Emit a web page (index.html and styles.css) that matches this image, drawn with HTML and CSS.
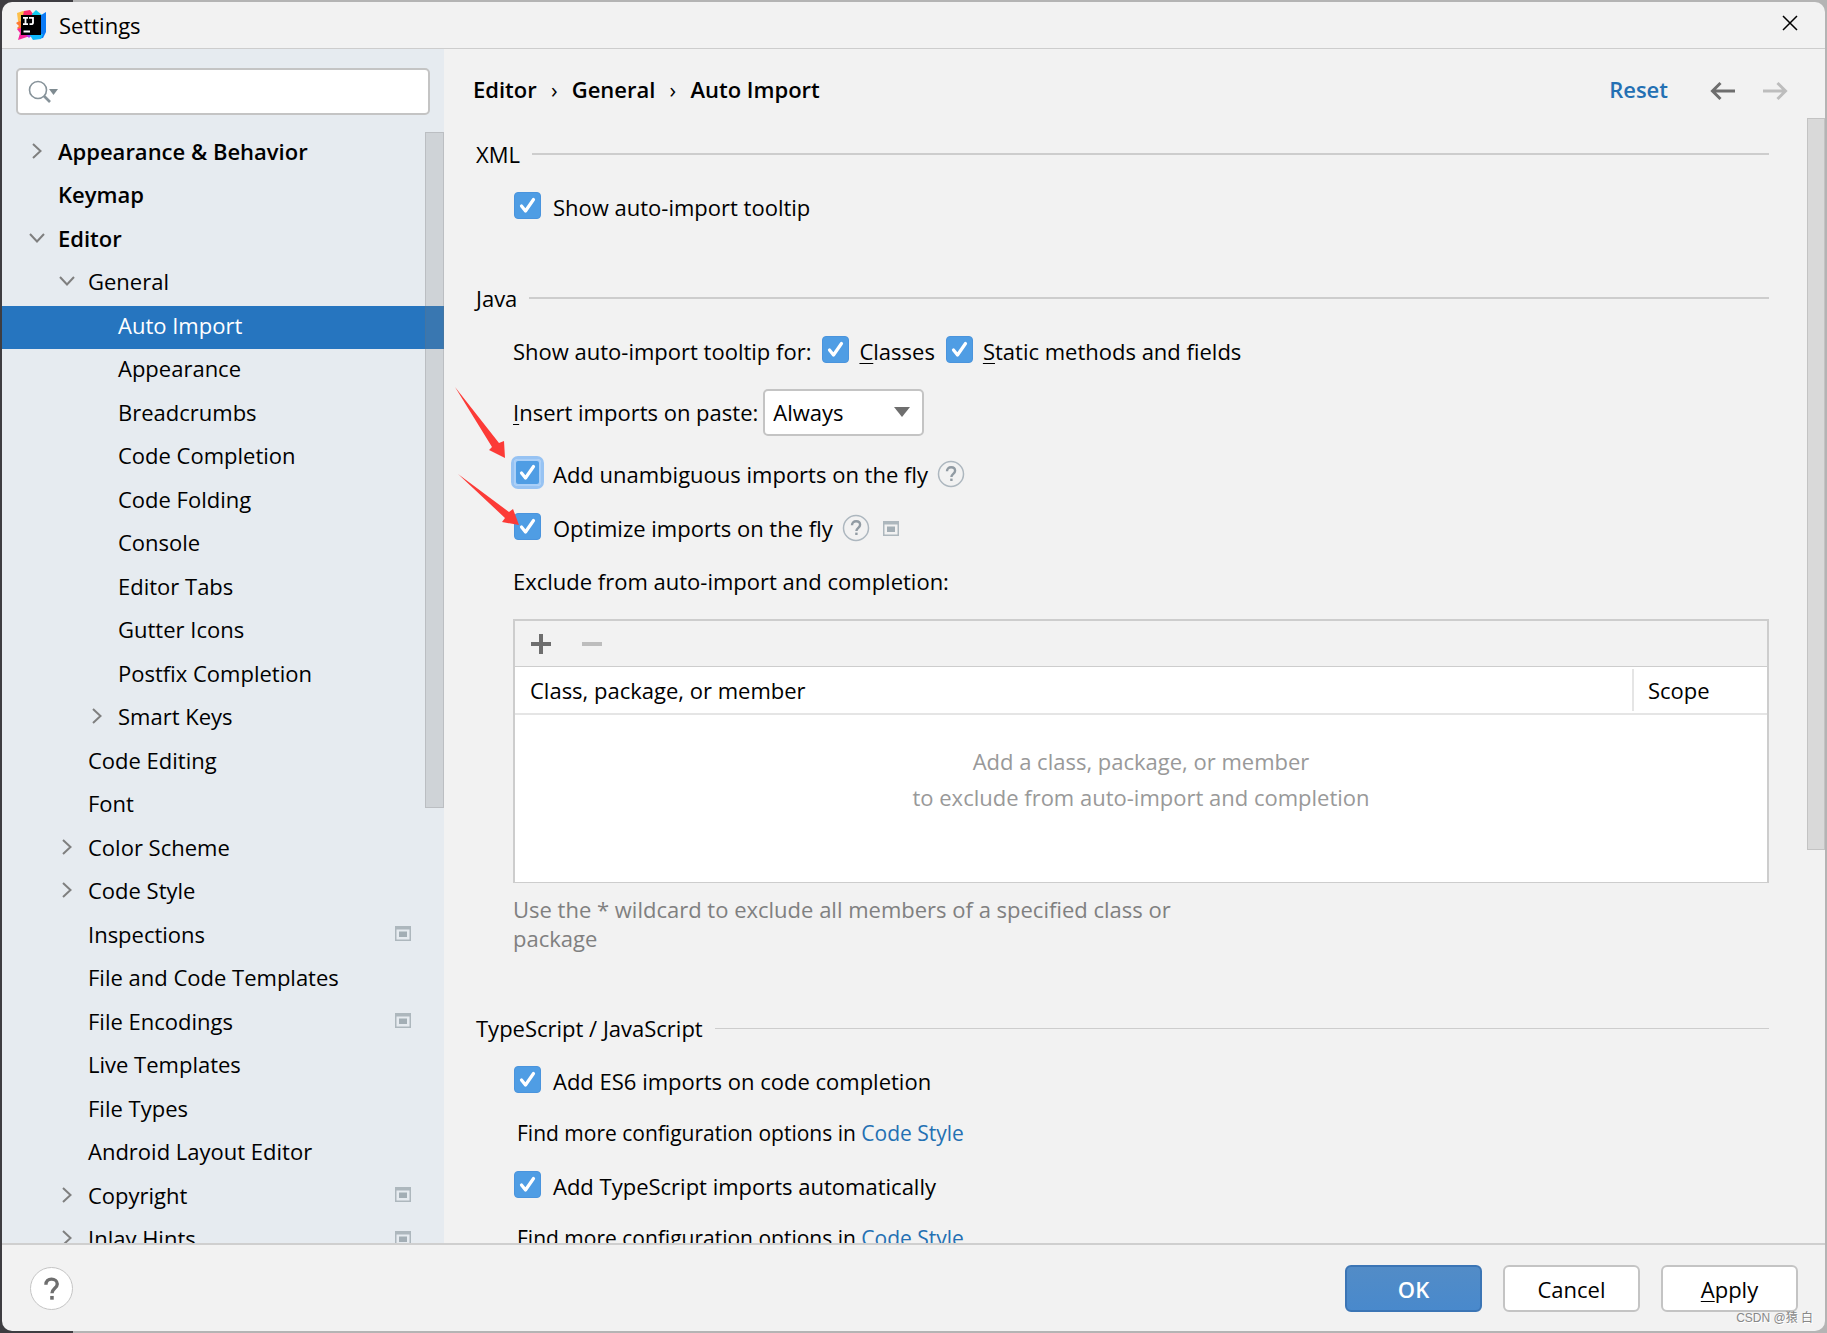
FILE: index.html
```html
<!DOCTYPE html>
<html lang="en">
<head>
<meta charset="utf-8">
<title>Settings</title>
<link rel="stylesheet" href="styles.css">
</head>
<body>
<svg class="defs" aria-hidden="true">
  <symbol id="right" viewBox="0 0 20 20"><path d="M6 3l7.500 7L6 17" fill="none" stroke="#7f7f7f" stroke-width="2"/></symbol>
  <symbol id="down" viewBox="0 0 20 20"><path d="M3 6l7 7.500L17 6" fill="none" stroke="#7f7f7f" stroke-width="2"/></symbol>
  <symbol id="project" viewBox="0 0 16 15"><path fill="#adb7bd" fill-rule="evenodd" d="M0 0h16v15H0zM1.500 3.500v10h13v-10z"/><path fill="#a3aeb5" d="M4 5.500h8v5.500H4z"/></symbol>
  <symbol id="question" viewBox="0 0 28 28"><circle cx="14" cy="14" r="12.500" fill="none" stroke="#adb7bf" stroke-width="1.500"/><path d="M10 11.300c0-2.600 1.700-4 4.100-4 2.300 0 4 1.400 4 3.500 0 3-3.700 3.100-3.700 6.200" fill="none" stroke="#919ba3" stroke-width="2.400"/><path fill="#919ba3" d="M13.200 18.600h2.400v2.400h-2.400z"/></symbol>
</svg>
<div class="window">
  <header class="titlebar">
    <svg class="logo" viewBox="0 0 30 30" aria-hidden="true">
      <path fill="#ff7a2f" d="M0 13l6-4 3 9-3 5-5-5 2-2z"/>
      <path fill="#fdc04b" d="M1 3l6-2 5 1-4 10-6-1z"/>
      <path fill="#ff2d6b" d="M8 1l6-1 4 5 1 4H6z"/>
      <path fill="#f7269c" d="M1 19l7-2 9 9-6 1-9 3 2-7z"/>
      <path fill="#ad3df2" d="M9 24h8l-4 4z"/>
      <path fill="#12cbee" d="M16 4l4-4 6 5v5H15z"/>
      <path fill="#0a7af5" d="M22 7l8-5v20l-3 6-7 1-2-5z"/>
      <path fill="#10b9fb" d="M13 24h14l-2 5-8 1z"/>
      <path d="M5 5h20v20H5z"/>
      <path fill="none" stroke="#fff" stroke-width="1.800" d="M7 7.900h5M9.500 7.900v6.200M7 14.100h5M13 7.900h4v4.500q0 1.800-2 1.800h-1.500M7.500 21.500h6.500"/>
    </svg>
    <h1 class="title">Settings</h1>
    <button class="close" aria-label="Close"><svg width="16" height="16" viewBox="0 0 16 16"><path d="M1 1l14 14M15 1L1 15" stroke="#000" stroke-width="1.500"/></svg></button>
  </header>

  <nav class="sidebar" aria-label="Settings categories">
    <div class="search">
      <svg width="32" height="24" viewBox="0 0 32 24" aria-hidden="true"><circle cx="10" cy="10" r="8.500" fill="none" stroke="#87939a" stroke-width="1.600"/><path d="M16 16l6 6" stroke="#87939a" stroke-width="2.600"/><path fill="#7f8b91" d="M21 9h9l-4.500 6z"/></svg>
      <input type="text" aria-label="Search settings">
    </div>
    <div class="tree-pane">
      <ul class="tree">
        <li class="bold"><svg class="arrow"><use href="#right"/></svg><a href="#">Appearance &amp; Behavior</a></li>
        <li class="bold"><span class="arrow"></span><a href="#">Keymap</a></li>
        <li class="bold"><svg class="arrow"><use href="#down"/></svg><a href="#">Editor</a></li>
        <li class="l2"><svg class="arrow"><use href="#down"/></svg><a href="#">General</a></li>
        <li class="l3 selected"><span class="arrow"></span><a href="#" aria-current="page">Auto Import</a></li>
        <li class="l3"><span class="arrow"></span><a href="#">Appearance</a></li>
        <li class="l3"><span class="arrow"></span><a href="#">Breadcrumbs</a></li>
        <li class="l3"><span class="arrow"></span><a href="#">Code Completion</a></li>
        <li class="l3"><span class="arrow"></span><a href="#">Code Folding</a></li>
        <li class="l3"><span class="arrow"></span><a href="#">Console</a></li>
        <li class="l3"><span class="arrow"></span><a href="#">Editor Tabs</a></li>
        <li class="l3"><span class="arrow"></span><a href="#">Gutter Icons</a></li>
        <li class="l3"><span class="arrow"></span><a href="#">Postfix Completion</a></li>
        <li class="l3"><svg class="arrow"><use href="#right"/></svg><a href="#">Smart Keys</a></li>
        <li class="l2"><span class="arrow"></span><a href="#">Code Editing</a></li>
        <li class="l2"><span class="arrow"></span><a href="#">Font</a></li>
        <li class="l2"><svg class="arrow"><use href="#right"/></svg><a href="#">Color Scheme</a></li>
        <li class="l2"><svg class="arrow"><use href="#right"/></svg><a href="#">Code Style</a></li>
        <li class="l2"><span class="arrow"></span><a href="#">Inspections</a><svg class="project"><use href="#project"/></svg></li>
        <li class="l2"><span class="arrow"></span><a href="#">File and Code Templates</a></li>
        <li class="l2"><span class="arrow"></span><a href="#">File Encodings</a><svg class="project"><use href="#project"/></svg></li>
        <li class="l2"><span class="arrow"></span><a href="#">Live Templates</a></li>
        <li class="l2"><span class="arrow"></span><a href="#">File Types</a></li>
        <li class="l2"><span class="arrow"></span><a href="#">Android Layout Editor</a></li>
        <li class="l2"><svg class="arrow"><use href="#right"/></svg><a href="#">Copyright</a><svg class="project"><use href="#project"/></svg></li>
        <li class="l2"><svg class="arrow"><use href="#right"/></svg><a href="#">Inlay Hints</a><svg class="project"><use href="#project"/></svg></li>
      </ul>
      <div class="thumb tree-thumb"></div>
    </div>
  </nav>

  <main class="content">
    <div class="content-head">
      <div class="crumbs"><span>Editor</span><span class="sep">›</span><span>General</span><span class="sep">›</span><span>Auto Import</span></div>
      <a class="reset" href="#">Reset</a>
      <button class="nav" aria-label="Back"><svg width="26" height="20" viewBox="0 0 26 20"><path d="M25 10H3M10.500 2L2.500 10l8 8" fill="none" stroke="#6e6e6e" stroke-width="3"/></svg></button>
      <button class="nav" aria-label="Forward" disabled><svg width="26" height="20" viewBox="0 0 26 20"><path d="M1 10h22M15.500 2l8 8-8 8" fill="none" stroke="#bdbdbd" stroke-width="3"/></svg></button>
    </div>
    <div class="pane">
      <div class="form">
        <section>
          <h2>XML</h2>
          <div class="row"><label><input type="checkbox" checked>Show auto-import tooltip</label></div>
        </section>

        <section>
          <h2>Java</h2>
          <div class="row inline"><span>Show auto-import tooltip for:</span><label><input type="checkbox" checked><span><u>C</u>lasses</span></label><label><input type="checkbox" checked><span><u>S</u>tatic methods and fields</span></label></div>
          <div class="row select-row"><label for="paste"><span><u>I</u>nsert imports on paste:</span></label><select id="paste"><option>Always</option><option>Ask</option><option>Never</option></select></div>
          <div class="row"><label><input class="focused" type="checkbox" checked>Add unambiguous imports on the fly</label><svg class="question"><use href="#question"/></svg></div>
          <div class="row tight"><label><input type="checkbox" checked>Optimize imports on the fly</label><svg class="question"><use href="#question"/></svg><svg class="project"><use href="#project"/></svg></div>
          <p class="caption" id="exclude">Exclude from auto-import and completion:</p>
          <div class="excludes">
            <div class="tools">
              <button aria-label="Add"><svg width="20" height="20" viewBox="0 0 20 20"><path d="M0 10h20M10 0v20" stroke="#6e6e6e" stroke-width="4"/></svg></button>
              <button aria-label="Remove" disabled><svg width="20" height="20" viewBox="0 0 20 20"><path d="M0 10h20" stroke="#bdbdbd" stroke-width="4"/></svg></button>
            </div>
            <table aria-labelledby="exclude">
              <thead><tr><th>Class, package, or member</th><th class="scope"><span>Scope</span></th></tr></thead>
              <tbody><tr><td colspan="2">Add a class, package, or member<br>to exclude from auto-import and completion</td></tr></tbody>
            </table>
          </div>
          <p class="hint">Use the * wildcard to exclude all members of a specified class or package</p>
        </section>

        <section>
          <h2 class="thin">TypeScript / JavaScript</h2>
          <div class="row"><label><input type="checkbox" checked>Add ES6 imports on code completion</label></div>
          <p class="more">Find more configuration options in <a href="#">Code Style</a></p>
          <div class="row"><label><input type="checkbox" checked>Add TypeScript imports automatically</label></div>
          <p class="more">Find more configuration options in <a href="#">Code Style</a></p>
        </section>
      </div>
      <div class="thumb pane-thumb"></div>
    </div>
  </main>

  <footer class="footer">
    <button class="help" aria-label="Help"><svg width="41" height="41" viewBox="0 0 44 44"><path d="M16 18c0-4 2.600-6 6-6s6.200 2 6.200 5.200c0 4.500-5.700 4.700-5.700 10" fill="none" stroke="#6e6e6e" stroke-width="3.600"/><path fill="#6e6e6e" d="M20.600 30h3.800v4h-3.800z"/></svg></button>
    <button class="btn primary">OK</button>
    <button class="btn">Cancel</button>
    <button class="btn"><span><u>A</u>pply</span></button>
  </footer>
</div>
<svg class="pointers" width="70" height="145" viewBox="0 0 70 145" aria-hidden="true"><path fill="#fc3b37" d="M0 2l44 56 5-2 1 17-16-8 3-3zM3 89l51 38 4-3 6 16-17-3 3-4z"/></svg>
<div class="watermark">CSDN @猿 白</div>
</body>
</html>
```
FILE: styles.css
```css
* { box-sizing: border-box; }
html, body { height: 100%; }
body {
  margin: 0;
  padding: 2px;
  overflow: hidden;
  background: linear-gradient(90deg, #3e3d41 0, #3e3d41 73px, #b4b4b4 73px);
  font: 22px/30px "Open Sans", "Noto Sans CJK SC", sans-serif;
  color: #000;
}
h1, h2, p, ul { margin: 0; padding: 0; font-size: inherit; font-weight: 400; }
button { border: 0; padding: 0; background: none; font: inherit; color: inherit; }
a { color: #2470b3; text-decoration: none; }
u { text-underline-offset: 3px; text-decoration-thickness: 1px; }
svg { display: block; flex: none; }
.defs { position: absolute; width: 0; height: 0; }

.window {
  display: grid;
  grid-template: 47px minmax(0, 1fr) 88px / 442px minmax(0, 1fr);
  height: 100%;
  border-radius: 10px;
  overflow: hidden;
  background: #f2f2f2;
}
.titlebar {
  grid-column: 1 / -1;
  display: flex;
  align-items: center;
  padding: 0 27px 0 14px;
  border-bottom: 1px solid #cdcdcd;
}
.logo { width: 30px; height: 30px; }
.title { margin-left: 13px; flex: 1; }
.close { padding: 0 0 4px; }

.sidebar { display: flex; flex-direction: column; min-height: 0; background: #e6ebf0; }
.search {
  display: flex;
  align-items: center;
  height: 47px;
  margin: 19px 14px 17px;
  padding-left: 10px;
  border: 2px solid #c4c4c4;
  border-radius: 5px;
  background: #fff;
}
.search input { flex: 1; min-width: 0; border: 0; outline: 0; background: none; font: inherit; }
.tree-pane { position: relative; flex: 1; min-height: 0; overflow: hidden; }
.tree { list-style: none; }
.tree li { display: flex; align-items: center; height: 44px; padding: 0 33px 6px 25px; }
.tree li:nth-child(odd) { height: 43px; }
.tree .l2 { padding-left: 55px; }
.tree .l3 { padding-left: 85px; }
.tree .bold { font-weight: 600; }
.tree a { flex: 1; color: inherit; }
.tree .selected { background: #2675bf; color: #fff; }
.arrow { width: 20px; height: 20px; margin-right: 11px; flex: none; }
.project { width: 16px; height: 15px; }

.thumb { position: absolute; top: 0; right: 0; border: 1px solid rgba(110, 110, 110, .2); background: rgba(128, 128, 128, .22); }
.tree-thumb { width: 19px; height: 676px; }
.pane-thumb { width: 18px; height: 732px; }

.content { display: flex; flex-direction: column; min-height: 0; }
.content-head { display: flex; align-items: center; height: 69px; padding: 14px 37px 0 29px; }
.crumbs { display: flex; flex: 1; padding-bottom: 4px; font-weight: 600; }
.crumbs .sep { width: 35px; text-align: center; font-weight: 400; }
.reset { margin-right: 42px; padding-bottom: 4px; font-weight: 600; }
.nav + .nav { margin-left: 26px; }
.pane { position: relative; flex: 1; min-height: 0; overflow: hidden; }
.form { padding: 21px 56px 0 32px; }
section + section { margin-top: 56px; }
h2 { display: flex; align-items: center; gap: 12px; }
h2::after { content: ""; flex: 1; height: 2px; background: #cdcdcd; }
h2.thin::after { height: 1px; }
section > :not(h2) { margin-left: 37px; }
.row { display: flex; align-items: center; height: 40px; margin-top: 18px; }
.row.tight { margin-top: 14px; }
.row.select-row { height: 48px; margin-top: 17px; }
.row label { display: flex; align-items: center; gap: 12px; }
.row.inline, .inline label { gap: 10px; }
input[type="checkbox"] {
  appearance: none;
  width: 27px;
  height: 27px;
  margin: 0 0 4px 1px;
  border: 1px solid #4a94dd;
  border-radius: 4px;
  background: #4f9de4 url("data:image/svg+xml,%3Csvg xmlns='http://www.w3.org/2000/svg' viewBox='0 0 25 25'%3E%3Cpath d='M6.500 13l4 5L18.500 6.500' fill='none' stroke='white' stroke-width='3.200' stroke-linecap='round' stroke-linejoin='round'/%3E%3C/svg%3E") center / 25px 25px;
}
input.focused { outline: 3px solid #97c3f3; border: 2px solid #a9cff8; background-origin: border-box; }
select {
  appearance: none;
  width: 161px;
  height: 47px;
  margin-left: 5px;
  padding: 0 8px;
  border: 2px solid #c4c4c4;
  border-radius: 5px;
  font: inherit;
  color: inherit;
  background: #fff url("data:image/svg+xml,%3Csvg xmlns='http://www.w3.org/2000/svg' viewBox='0 0 16 10'%3E%3Cpath d='M0 0h16l-8 10z' fill='%236e6e6e'/%3E%3C/svg%3E") right 12px center / 16px 10px no-repeat;
}
.question { width: 28px; height: 28px; margin-left: 9px; }
.row .project { margin-left: 13px; }
.caption { margin-top: 18px; }
.excludes { margin-top: 23px; border: 2px solid #cdcdcd; border-bottom-width: 1px; background: #fff; }
.tools { display: flex; align-items: center; gap: 31px; height: 46px; padding-left: 16px; border-bottom: 1px solid #cdcdcd; background: #f2f2f2; }
table { width: 100%; border-collapse: collapse; }
th { height: 47px; padding: 0 0 0 15px; border-bottom: 2px solid #e5e5e5; font-weight: 400; text-align: left; }
th.scope { width: 135px; padding: 0; }
.scope span { display: block; padding: 6px 0 6px 14px; border-left: 2px solid #e5e5e5; }
td { height: 168px; padding: 28px 0 0; vertical-align: top; text-align: center; line-height: 36px; color: #999; }
.hint { max-width: 680px; margin-top: 12px; margin-bottom: 60px; line-height: 29px; color: #808080; }
.more { margin-top: 17px; padding-left: 4px; font-size: 21px; }

.footer {
  grid-column: 1 / -1;
  display: flex;
  align-items: center;
  gap: 21px;
  padding: 1px 27px 0 28px;
  border-top: 2px solid #cfcfcf;
}
.help { margin-right: auto; border: 1px solid #c4c4c4; border-radius: 50%; background: #fff; }
.btn { width: 137px; height: 47px; border: 2px solid #c4c4c4; border-radius: 6px; background: #fff; }
.primary { border-color: #3b75b5; background: linear-gradient(#528cc7, #4989cc); color: #fff; font-weight: 600; }

/* Annotations drawn over the dialog */
.pointers { position: absolute; left: 455px; top: 385px; }
.watermark { position: absolute; right: 14px; bottom: 5px; font: 12px/20px "Liberation Sans", "Noto Sans CJK SC", sans-serif; color: #888; text-shadow: 1px 1px 0 #fff; }
```
